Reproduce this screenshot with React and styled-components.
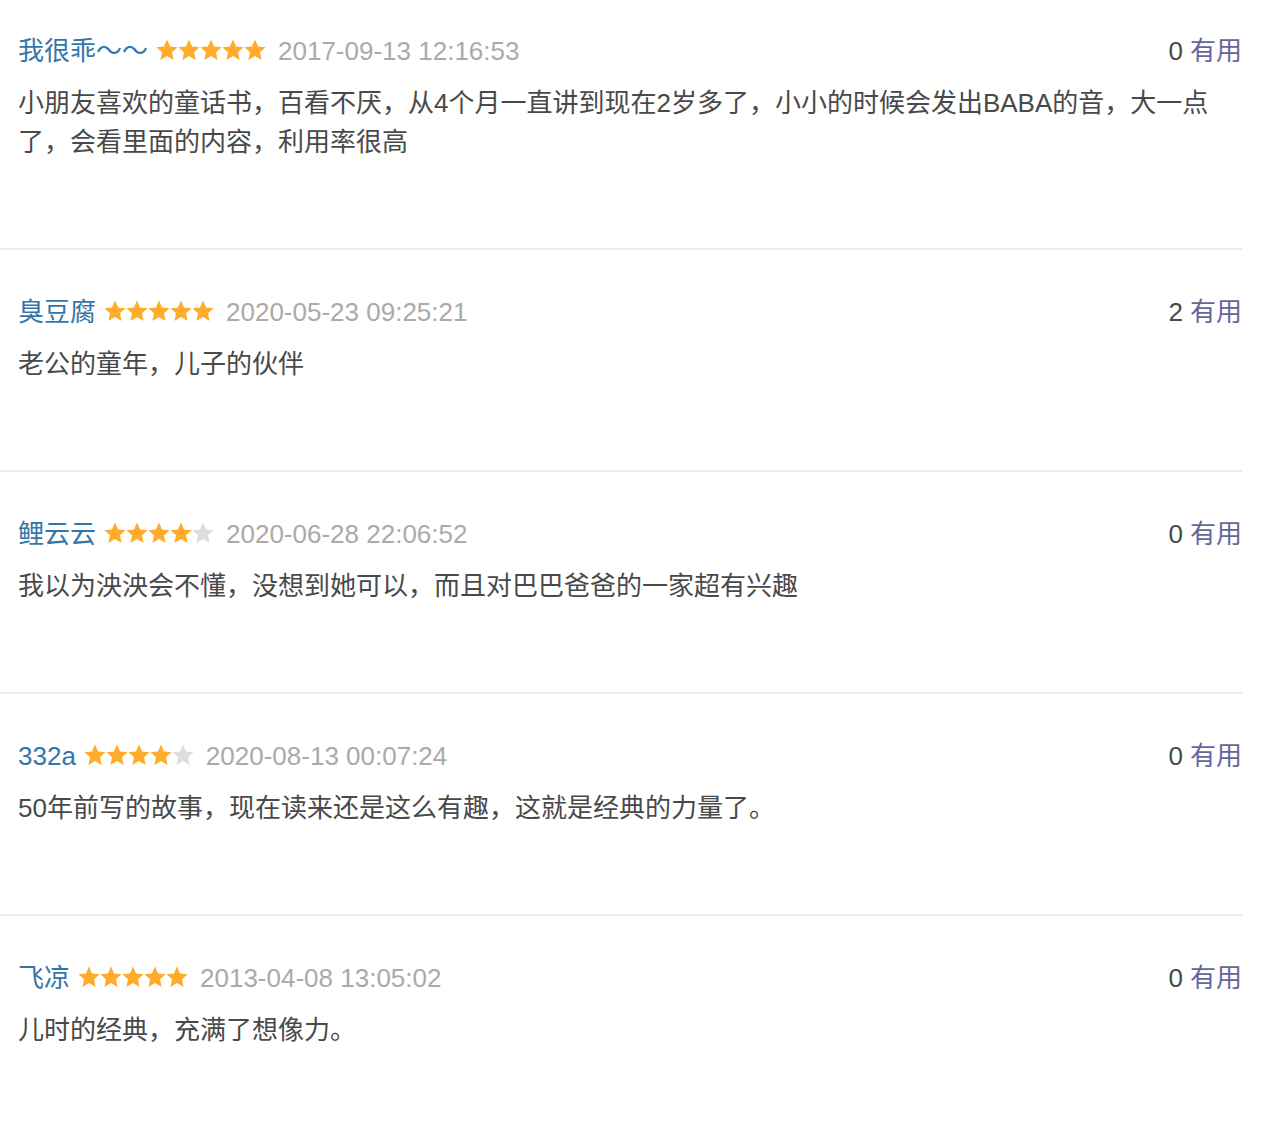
import React from "react";
import styled, { createGlobalStyle } from "styled-components";

const GlobalStyle = createGlobalStyle`
  html, body {
    margin: 0;
    padding: 0;
    background: #ffffff;
  }
  body {
    font-family: "Liberation Sans", Arial, "Noto Sans CJK SC", sans-serif;
    color: #494949;
  }
`;

const List = styled.div`
  width: 1242px;
  display: flex;
  flex-direction: column;
`;

const Review = styled.div`
  padding: ${(p) => (p.$first ? "31px" : "42px")} 0 86px 18px;
  border-bottom: 2px solid #ebebeb;
`;

const Header = styled.div`
  display: flex;
  align-items: center;
  height: 40px;
  font-size: 26px;
  line-height: 40px;
  white-space: nowrap;
`;

const Name = styled.span`
  color: #3377aa;
`;

const Stars = styled.span`
  display: inline-flex;
  margin: 0 12px 0 8px;
  position: relative;
  top: -1px;
`;

const Date = styled.span`
  color: #aaaaaa;
`;

const Votes = styled.div`
  margin-left: auto;
  display: flex;
  gap: 7px;
`;

const Count = styled.span`
  color: #494949;
`;

const Useful = styled.span`
  color: #666699;
`;

const Body = styled.p`
  margin: 13px 0 0;
  width: 1205px;
  font-size: 26px;
  line-height: 39px;
  color: #494949;
`;

const StarSvg = ({ on }) => (
  <svg width="22" height="23" viewBox="0 0 22 22.5">
    <polygon
      points="11,0.3 14.1,7.3 21.6,8.0 16,13.1 17.6,20.8 11,16.8 4.4,20.8 6,13.1 0.4,8.0 7.9,7.3"
      fill={on ? "#ffac2d" : "#dddddd"}
    />
  </svg>
);

const Rating = ({ value }) => (
  <Stars>
    {[0, 1, 2, 3, 4].map((i) => (
      <StarSvg key={i} on={i < value} />
    ))}
  </Stars>
);

const reviews = [
  {
    name: "我很乖～～",
    rating: 5,
    date: "2017-09-13 12:16:53",
    votes: 0,
    text: "小朋友喜欢的童话书，百看不厌，从4个月一直讲到现在2岁多了，小小的时候会发出BABA的音，大一点了，会看里面的内容，利用率很高",
  },
  {
    name: "臭豆腐",
    rating: 5,
    date: "2020-05-23 09:25:21",
    votes: 2,
    text: "老公的童年，儿子的伙伴",
  },
  {
    name: "鲤云云",
    rating: 4,
    date: "2020-06-28 22:06:52",
    votes: 0,
    text: "我以为泱泱会不懂，没想到她可以，而且对巴巴爸爸的一家超有兴趣",
  },
  {
    name: "332a",
    rating: 4,
    date: "2020-08-13 00:07:24",
    votes: 0,
    text: "50年前写的故事，现在读来还是这么有趣，这就是经典的力量了。",
  },
  {
    name: "飞凉",
    rating: 5,
    date: "2013-04-08 13:05:02",
    votes: 0,
    text: "儿时的经典，充满了想像力。",
  },
];

export default function App() {
  return (
    <>
      <GlobalStyle />
      <List>
        {reviews.map((r, i) => (
          <Review key={i} $first={i === 0}>
            <Header>
              <Name>{r.name}</Name>
              <Rating value={r.rating} />
              <Date>{r.date}</Date>
              <Votes>
                <Count>{r.votes}</Count>
                <Useful>有用</Useful>
              </Votes>
            </Header>
            <Body>{r.text}</Body>
          </Review>
        ))}
      </List>
    </>
  );
}
